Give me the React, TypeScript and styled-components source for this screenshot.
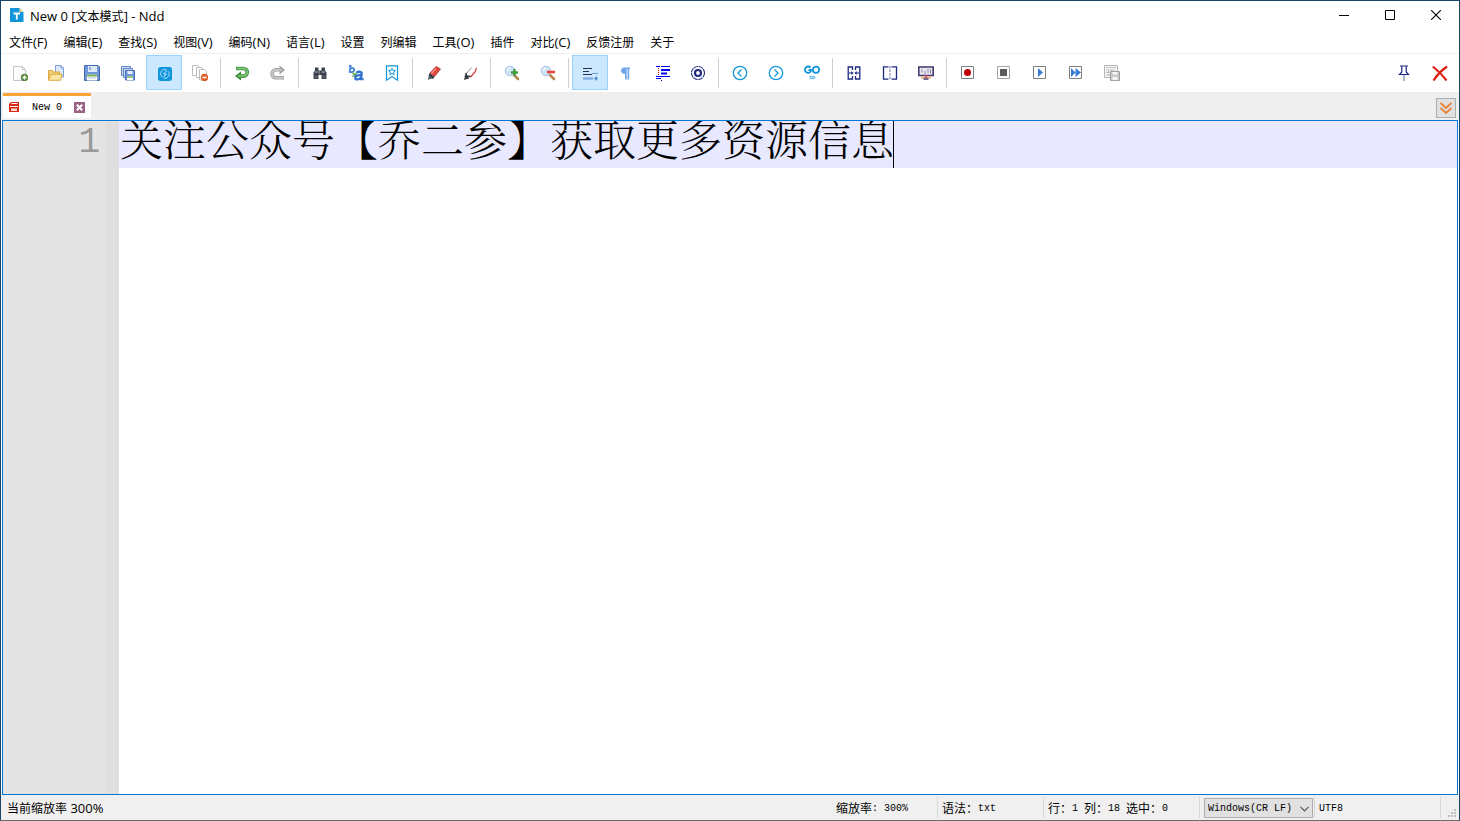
import React, { useState } from 'react';
import styled, { createGlobalStyle } from 'styled-components';

const uiFont = '"Open Sans", "Noto Sans CJK SC", sans-serif';
const monoFont = '"Liberation Mono", "Noto Sans CJK SC", monospace';

const GlobalStyle = createGlobalStyle`
  *, *::before, *::after { box-sizing: border-box; }
  body { margin: 0; background: #fff; }
  button, select, textarea { font: inherit; color: inherit; margin: 0; padding: 0; border: 0; background: none; border-radius: 0; }
`;

const Window = styled.div`
  display: flex;
  flex-direction: column;
  min-height: 100vh;
  border: 1px solid #1a4468;
  border-bottom-color: #6b6b6b;
  background: #fff;
  color: #000;
  font: 12px/16px ${uiFont};
`;

/* Latin runs are set one size up so they balance the Chinese glyphs. */
const Latin = styled.span`
  font-size: 13px;
`;

const TitleBar = styled.header`
  display: flex;
  align-items: center;
  height: 28px;
  padding-left: 9px;
`;

const Title = styled.h1`
  flex: 1;
  margin: 0 0 0 6px;
  padding-top: 2px;
  font-size: 12px;
  font-weight: 400;
`;

const WindowButton = styled.button`
  display: grid;
  place-items: center;
  width: 46px;
  height: 28px;
`;

const MenuBar = styled.nav`
  display: flex;
  height: 25px;
  padding-top: 3px;
  border-bottom: 1px solid #f0f0f0;
`;

const MenuItem = styled.button`
  padding: 0 8px;
  white-space: nowrap;
`;

const ToolBar = styled.div`
  display: flex;
  align-items: center;
  padding: 1px 1px 2px;
`;

const ToolButton = styled.button<{ $active?: boolean }>`
  display: grid;
  place-items: center;
  width: 36px;
  height: 35px;
  border: 1px solid ${(p) => (p.$active ? '#99d1ff' : 'transparent')};
  background: ${(p) => (p.$active ? '#cce8ff' : 'transparent')};
`;

const ToolSeparator = styled.span`
  width: 1px;
  height: 30px;
  margin: 0 3px 0 2px;
  background: #cfcfcf;
`;

const Spacer = styled.span`
  flex: 1;
`;

const TabStrip = styled.div`
  display: flex;
  align-items: flex-end;
  justify-content: space-between;
  height: 28px;
  padding: 0 3px 2px 2px;
  background: #efefef;
`;

const Tab = styled.div`
  display: flex;
  align-items: center;
  width: 88px;
  height: 25px;
  padding: 0 6px;
  border-top: 3px solid #faa638;
  background: #fff;
`;

const TabLabel = styled.button`
  flex: 1;
  display: flex;
  align-items: center;
  gap: 12px;
`;

const TabName = styled.span`
  padding-top: 2px;
  font: 10px/16px ${monoFont};
`;

const TabClose = styled.button`
  display: grid;
  place-items: center;
  width: 11px;
  height: 11px;
`;

const TabOverflow = styled.button`
  display: grid;
  place-items: center;
  width: 20px;
  height: 20px;
  border: 1px solid #adadad;
  background: #e1e1e1;
`;

const Editor = styled.main`
  flex: 1;
  display: flex;
  margin: 0 1px;
  border: 1px solid #0078d7;
`;

const LineNumbers = styled.div`
  width: 102px;
  padding-right: 5px;
  background: #e4e4e4;
  color: #999;
  font: 36px/44px ${monoFont};
  text-align: right;
`;

const FoldMargin = styled.div`
  width: 14px;
  background: #dfdfdf;
`;

const TextPane = styled.div`
  position: relative;
  flex: 1;
  display: flex;
  background: linear-gradient(#e8e8ff, #e8e8ff) 0 0 / 100% 47px no-repeat;
  font: 300 43px/34px "Noto Serif CJK SC", "Noto Sans CJK SC", serif;
`;

const TextArea = styled.textarea`
  flex: 1;
  padding-left: 1px;
  resize: none;
  outline: 0;
  overflow: hidden;
`;

const Caret = styled.span`
  position: absolute;
  top: 0;
  width: 1px;
  height: 47px;
  background: #000;
`;

const StatusBar = styled.footer`
  display: flex;
  align-items: center;
  height: 25px;
  background: #f0f0f0;
`;

const StatusMessage = styled.span`
  flex: 1;
  padding: 1px 0 0 6px;
`;

const StatusCell = styled.span<{ $width: number; $control?: boolean }>`
  display: flex;
  align-items: center;
  width: ${(p) => p.$width}px;
  height: 21px;
  padding: ${(p) => (p.$control ? 0 : 2)}px 0 0 4px;
  border-right: 1px solid #d7d7d7;
  white-space: pre;
`;

const Mono = styled.span`
  font: 10px/16px ${monoFont};
`;

const EolPicker = styled.label`
  position: relative;
  display: flex;
`;

const EolSelect = styled.select`
  appearance: none;
  width: 109px;
  height: 20px;
  padding: 1px 0 0 3px;
  border: 1px solid #adadad;
  background: #e1e1e1;
  font: 10px/18px ${monoFont};
`;

const EolArrow = styled.svg`
  position: absolute;
  right: 4px;
  top: 8px;
  pointer-events: none;
`;

const Grip = styled.svg`
  align-self: flex-end;
  margin: 0 1px 1px 7px;
`;

const Icon = ({ children, size = 16 }: { children: React.ReactNode; size?: number }) => (
  <svg width={size} height={size} viewBox={`0 0 ${size} ${size}`} fill="none" aria-hidden="true">
    {children}
  </svg>
);

const Lens = () => (
  <>
    <path d="M10 10l4 4" stroke="#b58a4a" strokeWidth="2.6" strokeLinecap="round" />
    <circle cx="6" cy="6" r="4.8" fill="#cfe2f7" stroke="#a9c4e6" />
    <path d="M3.4 5.6a3 3 0 0 1 2.8-2.4" stroke="#f4faff" strokeWidth="1.4" />
  </>
);

const icons = {
  newFile: (
    <Icon>
      <path d="M1.5 1.5h9l3 3v11h-12z" fill="#fcfcfc" stroke="#c6c6c6" />
      <path d="M10.5 1.5v3h3" stroke="#c6c6c6" />
      <circle cx="12.5" cy="12.5" r="3.4" fill="#5c9440" stroke="#47752f" strokeWidth=".6" />
      <path d="M12.5 10.6v3.8M10.6 12.5h3.8" stroke="#fff" strokeWidth="1.4" />
    </Icon>
  ),
  open: (
    <Icon>
      <path d="M7.5.5h5.5l2.5 2.5v9h-8z" fill="#dceafa" stroke="#7ba0d6" />
      <path d="M13 .5v2.5h2.5" stroke="#7ba0d6" />
      <path d="M.5 14.5v-9h4l1 1.5h6v7.5z" fill="#f2cf78" stroke="#d9a63f" />
      <path d="M.7 15.3l2-6h11.5l-1.7 6z" fill="#fbe5a2" stroke="#dcab45" />
    </Icon>
  ),
  save: (
    <Icon>
      <path d="M.5.5h13.5l1.5 1.5v13.5H.5z" fill="#6f97da" stroke="#4468b0" />
      <path d="M4 1h9v6H4z" fill="#dfeaf8" />
      <path d="M6 2v3" stroke="#4c73b9" />
      <path d="M3 9.5h10v6H3z" fill="#fff" />
      <path d="M3 10.5h10" stroke="#77b255" strokeWidth="2" />
      <path d="M4 13h8" stroke="#b9c3d2" />
    </Icon>
  ),
  saveAll: (
    <Icon>
      <path d="M1.5 1.5h9v9h-9z" fill="#c8d8ef" stroke="#6488c5" />
      <path d="M3.5 3.5h9v9h-9z" fill="#c8d8ef" stroke="#6488c5" />
      <path d="M5.5 5.5h9v9.5h-9z" fill="#6f97da" stroke="#4a70b6" />
      <path d="M7.5 6h5v3h-5z" fill="#e8f0fa" />
      <path d="M7 11h6v4H7z" fill="#fff" />
      <path d="M7 12h6" stroke="#77b255" strokeWidth="1.5" />
    </Icon>
  ),
  sync: (
    <Icon>
      <rect x="2" y="2" width="14" height="14" rx="2.5" fill="#1296db" />
      <path d="M10.8 5A4.2 4.2 0 0 0 6.2 12M7.5 13A4.2 4.2 0 0 0 12 6.1" stroke="#b9e2f6" strokeWidth=".9" />
      <path d="M10.5 6L7.5 9h2.8L7.7 12" stroke="#d5eefa" strokeWidth=".9" />
    </Icon>
  ),
  closeAll: (
    <Icon>
      <path d="M.5.5h5l2 2v8h-7z" fill="#fff" stroke="#bdbdbd" />
      <path d="M4.5 2.5h5l2 2v8h-7z" fill="#fff" stroke="#bdbdbd" />
      <path d="M7.5 4.5h5l2 2v8.5h-7z" fill="#fff" stroke="#bdbdbd" />
      <circle cx="12.5" cy="12.5" r="3.4" fill="#e8622a" stroke="#c74816" strokeWidth=".6" />
      <path d="M10.5 12.5h4" stroke="#fff" strokeWidth="1.5" />
    </Icon>
  ),
  undo: (
    <Icon>
      <path d="M2 3.5h7.5a3.8 3.8 0 0 1 0 7.6H6" stroke="#3b8b3c" strokeWidth="3.6" />
      <path d="M7 6.5v9L1 11z" fill="#3b8b3c" />
      <path d="M2.5 3.5h7a3.8 3.8 0 0 1 0 7.6H4" stroke="#7cc576" strokeWidth="1.8" />
    </Icon>
  ),
  redo: (
    <Icon>
      <path d="M10 4.8H6a3.8 3.8 0 0 0 0 8h8" stroke="#a0a0a0" strokeWidth="3.6" />
      <path d="M9.5.5v9l5.5-4.5z" fill="#a0a0a0" />
      <path d="M12 4.8H6a3.8 3.8 0 0 0 0 8h7.5" stroke="#c9c9c9" strokeWidth="1.8" />
    </Icon>
  ),
  find: (
    <Icon>
      <path d="M3 2.5h3.5v3H9.5v-3H13v3l1.5 2V14H9.5v-4h-3v4h-5V7.5l1.5-2z" fill="#3c434d" />
      <path d="M3 7h3.5M9.5 7H13" stroke="#a7b0bc" />
      <path d="M2.5 12h3M10.5 12h3M7.5 6v3" stroke="#747d8a" />
    </Icon>
  ),
  replace: (
    <Icon>
      <path d="M2.8 0L1.6 6.8c3 .8 4.6-.2 4.6-2S4 2.6 2.2 3.8M.8.8h2" stroke="#4384d8" strokeWidth="1.8" />
      <path d="M4.5 7.5l3 3M8 7.5v3.5H4.5" stroke="#4fa24b" strokeWidth="1.4" />
      <path d="M8.5 7.6c2-1.3 5.4-1.2 5.2.9l-.8 5.7h2.6M13 10.3c-3.4-.5-5.7.8-5.7 2.6s3.8 2.3 5.5-.4" stroke="#2f72cf" strokeWidth="2.3" />
    </Icon>
  ),
  bookmark: (
    <Icon>
      <path d="M2.5.8h11v14.400L8 11.500l-5.500 3.700z" stroke="#1296db" strokeWidth="1.2" />
      <path d="M8 3.300l1 2.200 2.400.2-1.800 1.600.5 2.300L8 8.400 5.900 9.600l.5-2.300-1.800-1.600L7 5.500z" stroke="#1296db" />
    </Icon>
  ),
  marker: (
    <Icon>
      <path d="M10 1.5L14.5 4 8.5 11.5 4 8z" fill="#e2463b" stroke="#a9302a" strokeWidth=".8" />
      <path d="M10 3.5l-4.5 5" stroke="#f58b80" strokeWidth="1.5" />
      <path d="M3.5 8L8.5 12l-1.5 2-4.5-3z" fill="#343a40" />
      <path d="M3 10.5L6.5 13.5 1.8 14.8z" fill="#59616a" />
    </Icon>
  ),
  unmark: (
    <Icon>
      <path d="M9.5 2.5L4 9" stroke="#8d9197" />
      <path d="M14.5 3L13 7l-4.5 5" stroke="#d93c33" strokeWidth="1.3" />
      <path d="M3.8 8L4.500 11l4 .5M2.8 10.5l4 3" stroke="#2c3137" strokeWidth="1.5" />
      <path d="M3 11l3.5 2.5-4.5 1.5z" fill="#343a40" />
    </Icon>
  ),
  zoomIn: (
    <Icon>
      <Lens />
      <path d="M10.5 4v7M7 7.5h7" stroke="#419a3c" strokeWidth="2.4" />
    </Icon>
  ),
  zoomOut: (
    <Icon>
      <Lens />
      <path d="M7 7h8" stroke="#e8443c" strokeWidth="2.6" />
    </Icon>
  ),
  wrap: (
    <Icon>
      <path d="M1 3.5h9M1 6.500h6M1 9.500h9" stroke="#26344a" strokeWidth="1.2" />
      <path d="M1 13.5h10" stroke="#7aa7de" strokeWidth="2.2" />
      <path d="M10 8.500h6.500v5H14" stroke="#6a9ad5" />
      <path d="M15 11v5l-3-2.500z" fill="#5186c8" />
    </Icon>
  ),
  pilcrow: (
    <Icon>
      <path d="M6.5 2.5H12V4h-.8v10.5H9.5V4H8.7v10.5H7V9C1.8 9 1.8 2.5 6.5 2.5z" fill="#70a7ec" />
    </Icon>
  ),
  indentGuide: (
    <Icon>
      <path d="M2 1.5h4M7 1.5h9M2 11.5h14M2 13.5h5M7 15.5h1" stroke="#0000f0" />
      <path d="M7 5h9M7 8.5h6" stroke="#0000f0" strokeWidth="2" />
      <path d="M4.5 3v8" stroke="#f00000" strokeDasharray="1 1" />
    </Icon>
  ),
  target: (
    <Icon>
      <circle cx="8" cy="8" r="6.5" stroke="#1c2b80" strokeWidth="1.1" strokeDasharray="4.500 .6" />
      <circle cx="8" cy="8" r="3" stroke="#1c2b80" strokeWidth="2.2" />
    </Icon>
  ),
  back: (
    <Icon>
      <circle cx="8" cy="8" r="6.7" stroke="#1296db" strokeWidth="1.3" />
      <path d="M9.5 4.5L6 8l3.5 3.5" stroke="#1296db" strokeWidth="1.3" />
    </Icon>
  ),
  forward: (
    <Icon>
      <circle cx="8" cy="8" r="6.7" stroke="#1296db" strokeWidth="1.3" />
      <path d="M6.5 4.5L10 8l-3.5 3.5" stroke="#1296db" strokeWidth="1.3" />
    </Icon>
  ),
  goTo: (
    <Icon>
      <path d="M6.6 2.6A3.2 3.2 0 1 0 7 6.2V5H4.5" stroke="#1296db" strokeWidth="1.8" />
      <circle cx="12" cy="4.7" r="3.1" stroke="#1296db" strokeWidth="1.8" />
      <path d="M5.5 10.8L7 12.5l-1.5 1.7M7.5 10.8L9 12.5l-1.5 1.7M9.5 10.8l1.5 1.7-1.5 1.7" stroke="#1296db" />
    </Icon>
  ),
  compare: (
    <Icon>
      <path d="M6.5 5V2H2.2v12h4.3v-3M9.5 5V2h4.3v12H9.5v-3" stroke="#1c2b80" strokeWidth="1.3" />
      <path d="M2.5 8h4.3M9.2 8h4.3" stroke="#1c2b80" strokeWidth="1.2" />
      <path d="M5.3 6v4L7.5 8zM10.7 6v4L8.5 8z" fill="#1c2b80" />
    </Icon>
  ),
  split: (
    <Icon>
      <path d="M6.5 1.8H1.5v12.4h5M9.5 1.8h5v12.4h-5" stroke="#1c2b80" strokeWidth="1.3" />
      <path d="M8 1v14" stroke="#8890ba" strokeWidth="1.3" strokeDasharray="2.5 1" />
    </Icon>
  ),
  board: (
    <Icon>
      <path d="M.8 2h14.400v8.500H.8z" fill="#e6e4ee" stroke="#453a72" strokeWidth="1.6" />
      <path d="M4 4.500v3M7 6v3M10 4v4M12.500 4.500v4" stroke="#8f8aa8" />
      <path d="M3 12.500h10" stroke="#eeb780" strokeWidth="2" />
      <path d="M8 10v3M5.500 14h5" stroke="#453a72" strokeWidth="1.6" />
      <path d="M6.500 10.500h3v2h-3z" fill="#e46b7c" />
    </Icon>
  ),
  record: (
    <Icon>
      <path d="M1.5 1.5h12v12h-12z" fill="#fff" stroke="#7e7e7e" />
      <circle cx="7.5" cy="7.5" r="3.5" fill="#c00000" />
    </Icon>
  ),
  stop: (
    <Icon>
      <path d="M1.5 1.5h12v12h-12z" fill="#fff" stroke="#a3a3a3" />
      <path d="M4 4h7v7H4z" fill="#5c5c5c" />
    </Icon>
  ),
  play: (
    <Icon>
      <path d="M1.5 1.5h12v12h-12z" fill="#fff" stroke="#7e7e7e" />
      <path d="M6 3v9l5-4.5z" fill="#3b7bd6" />
    </Icon>
  ),
  playMany: (
    <Icon>
      <path d="M1.5 1.5h12v12h-12z" fill="#fff" stroke="#7e7e7e" />
      <path d="M3 3v9l4.5-4.5zM7.5 3v9L13 7.5z" fill="#3b7bd6" />
    </Icon>
  ),
  saveMacro: (
    <Icon>
      <path d="M.5.5h13v12H.5z" fill="#f5f5f5" stroke="#b4b4b4" />
      <path d="M2 2.5h10M2 5h9M2 7.5h5M2 10h5M4.5 5v6M7.5 5v3" stroke="#c4c4c4" />
      <path d="M6.5 6.5h9v9h-9z" fill="#c9c9c9" stroke="#a0a0a0" />
      <path d="M8.5 7h5v2.5h-5zM8.5 12h5v3h-5z" fill="#f6f6f6" />
    </Icon>
  ),
  pin: (
    <Icon>
      <path d="M4 1h8M5.8 1v6l-2.3 2.5h9L10.2 7V1" stroke="#1c2b80" strokeWidth="1.2" />
      <path d="M8 10v6" stroke="#8c94c0" strokeWidth="1.4" />
    </Icon>
  ),
  closeFile: (
    <Icon>
      <path d="M.8 1.5C6 5.5 10.5 10 14.5 15.5M15 1.5C9.5 5.5 5 10 1.5 15.5" stroke="#dc1c0c" strokeWidth="2.2" />
    </Icon>
  ),
};

type Tool = { icon: keyof typeof icons; label: string; active?: boolean };

const toolGroups: Tool[][] = [
  [
    { icon: 'newFile', label: '新建' },
    { icon: 'open', label: '打开' },
    { icon: 'save', label: '保存' },
    { icon: 'saveAll', label: '全部保存' },
    { icon: 'sync', label: '自动保存', active: true },
    { icon: 'closeAll', label: '全部关闭' },
  ],
  [
    { icon: 'undo', label: '撤销' },
    { icon: 'redo', label: '重做' },
  ],
  [
    { icon: 'find', label: '查找' },
    { icon: 'replace', label: '替换' },
    { icon: 'bookmark', label: '书签' },
  ],
  [
    { icon: 'marker', label: '标记' },
    { icon: 'unmark', label: '清除标记' },
  ],
  [
    { icon: 'zoomIn', label: '放大' },
    { icon: 'zoomOut', label: '缩小' },
  ],
  [
    { icon: 'wrap', label: '自动换行', active: true },
    { icon: 'pilcrow', label: '显示空白' },
    { icon: 'indentGuide', label: '缩进参考线' },
    { icon: 'target', label: '定位' },
  ],
  [
    { icon: 'back', label: '后退' },
    { icon: 'forward', label: '前进' },
    { icon: 'goTo', label: '跳转' },
  ],
  [
    { icon: 'compare', label: '文件对比' },
    { icon: 'split', label: '目录对比' },
    { icon: 'board', label: '二进制对比' },
  ],
  [
    { icon: 'record', label: '录制宏' },
    { icon: 'stop', label: '停止录制' },
    { icon: 'play', label: '播放宏' },
    { icon: 'playMany', label: '多次播放' },
    { icon: 'saveMacro', label: '保存宏' },
  ],
];

const pinnedTools: Tool[] = [
  { icon: 'pin', label: '置顶' },
  { icon: 'closeFile', label: '关闭' },
];

const menus: { label: string; mnemonic?: string }[] = [
  { label: '文件', mnemonic: 'F' },
  { label: '编辑', mnemonic: 'E' },
  { label: '查找', mnemonic: 'S' },
  { label: '视图', mnemonic: 'V' },
  { label: '编码', mnemonic: 'N' },
  { label: '语言', mnemonic: 'L' },
  { label: '设置' },
  { label: '列编辑' },
  { label: '工具', mnemonic: 'O' },
  { label: '插件' },
  { label: '对比', mnemonic: 'C' },
  { label: '反馈注册' },
  { label: '关于' },
];

const renderTool = (tool: Tool) => (
  <ToolButton key={tool.icon} type="button" aria-label={tool.label} $active={tool.active}>
    {icons[tool.icon]}
  </ToolButton>
);

export default function App() {
  const [text, setText] = useState('关注公众号【乔二参】获取更多资源信息');

  return (
    <>
      <GlobalStyle />
      <Window>
        <TitleBar>
          <Icon size={14}>
            <path d="M0 0h9.5L13.5 4v10H0z" fill="#1296db" />
            <path d="M9.5 0l4 4h-4z" fill="#f3d78a" />
            <path d="M3.5 5.5h6.5M6.8 5.5v6" stroke="#fff" strokeWidth="1.8" />
          </Icon>
          <Title>
            <Latin>New 0 [</Latin>文本模式<Latin>] - Ndd</Latin>
          </Title>
          <WindowButton type="button" aria-label="最小化">
            <Icon size={10}><path d="M0 5.5h10" stroke="#000" /></Icon>
          </WindowButton>
          <WindowButton type="button" aria-label="最大化">
            <Icon size={10}><path d="M.5.5h9v9h-9z" stroke="#000" /></Icon>
          </WindowButton>
          <WindowButton type="button" aria-label="关闭窗口">
            <Icon size={10}><path d="M0 0l10 10M10 0L0 10" stroke="#000" strokeWidth="1.1" /></Icon>
          </WindowButton>
        </TitleBar>

        <MenuBar>
          {menus.map(({ label, mnemonic }) => (
            <MenuItem key={label} type="button">
              {label}
              {mnemonic && <Latin>{`(${mnemonic})`}</Latin>}
            </MenuItem>
          ))}
        </MenuBar>

        <ToolBar role="toolbar">
          {toolGroups.map((group, i) => (
            <React.Fragment key={group[0].icon}>
              {i > 0 && <ToolSeparator />}
              {group.map(renderTool)}
            </React.Fragment>
          ))}
          <Spacer />
          {pinnedTools.map(renderTool)}
        </ToolBar>

        <TabStrip>
          <Tab>
            <TabLabel type="button">
              <Icon size={11}>
                <path d="M0 2l2-2h8v10H0z" fill="#dc2a16" />
                <path d="M2.5 1.5h6M1 4.5h8" stroke="#fff" />
                <path d="M2 6.5h6V9H2z" fill="#fbd9d3" />
              </Icon>
              <TabName>New 0</TabName>
            </TabLabel>
            <TabClose type="button" aria-label="关闭标签">
              <Icon size={11}>
                <path d="M0 0h11v11H0z" fill="#9b6182" />
                <path d="M2.8 2.8l5.4 5.4M8.2 2.8L2.8 8.2" stroke="#fff" strokeWidth="2" />
              </Icon>
            </TabClose>
          </Tab>
          <TabOverflow type="button" aria-label="标签列表">
            <Icon size={14}>
              <path d="M1.5 2L7 7l5.5-5M1.5 7L7 12l5.5-5" stroke="#e8833a" strokeWidth="1.8" />
            </Icon>
          </TabOverflow>
        </TabStrip>

        <Editor>
          <LineNumbers>1</LineNumbers>
          <FoldMargin />
          <TextPane>
            <TextArea
              aria-label="文档内容"
              spellCheck={false}
              value={text}
              onChange={(e) => setText(e.target.value)}
            />
            <Caret style={{ left: `${text.length}em` }} />
          </TextPane>
        </Editor>

        <StatusBar>
          <StatusMessage>当前缩放率<Latin> 300%</Latin></StatusMessage>
          <StatusCell $width={106}>缩放率<Mono>: 300%</Mono></StatusCell>
          <StatusCell $width={106}>语法：<Mono>txt</Mono></StatusCell>
          <StatusCell $width={156}>
            行：<Mono>1 </Mono>列：<Mono>18 </Mono>选中：<Mono>0</Mono>
          </StatusCell>
          <StatusCell $width={115} $control>
            <EolPicker>
              <EolSelect aria-label="换行符" defaultValue="crlf">
                <option value="crlf">Windows(CR LF)</option>
                <option value="lf">Unix(LF)</option>
                <option value="cr">Mac(CR)</option>
              </EolSelect>
              <EolArrow width="9" height="6" viewBox="0 0 9 6" fill="none" aria-hidden="true">
                <path d="M.5.8l4 4 4-4" stroke="#555" strokeWidth="1.2" />
              </EolArrow>
            </EolPicker>
          </StatusCell>
          <StatusCell $width={126}><Mono>UTF8</Mono></StatusCell>
          <Grip width="10" height="10" viewBox="0 0 10 10" fill="#bfbfbf" aria-hidden="true">
            <path d="M6 0h2v2H6zM3 3h2v2H3zM6 3h2v2H6zM0 6h2v2H0zM3 6h2v2H3zM6 6h2v2H6z" />
          </Grip>
        </StatusBar>
      </Window>
    </>
  );
}
